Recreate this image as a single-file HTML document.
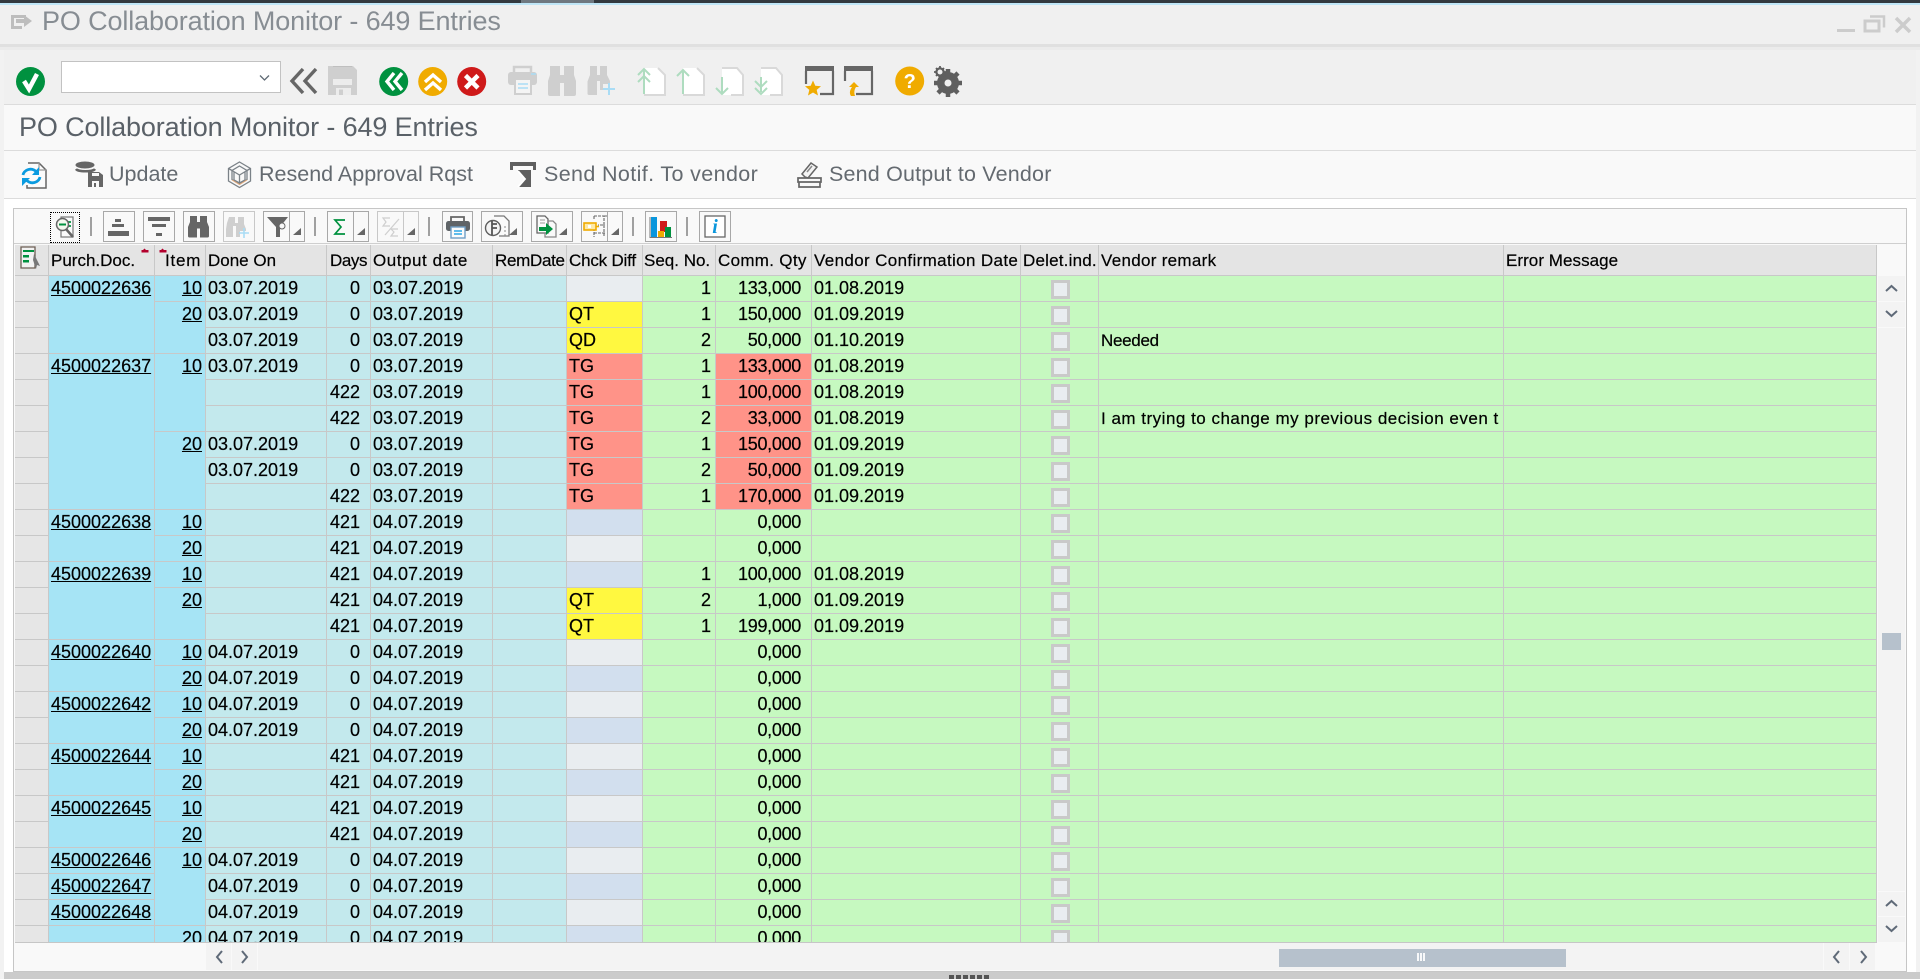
<!DOCTYPE html>
<html><head><meta charset="utf-8"><title>PO Collaboration Monitor - 649 Entries</title>
<style>
html,body{margin:0;padding:0;width:1920px;height:979px;overflow:hidden;background:#f2f2f2;font-family:"Liberation Sans",Arial,sans-serif;color:#000}
.a{position:absolute}
.ttl{position:absolute;font-size:27px;letter-spacing:-.13px;line-height:34px;white-space:nowrap}
.btn{position:absolute;font-size:21.5px;line-height:28px;top:160px;color:#646a70;white-space:nowrap}
#wrap{position:absolute;left:15px;top:245px;width:1862px;height:698px;overflow:hidden;border-bottom:1px solid #c6c6c6;box-sizing:border-box}
table{border-collapse:separate;border-spacing:0;table-layout:fixed;width:1862px}
td,th{box-sizing:border-box;height:26px;padding:0 0 0 2px;border-right:1px solid #c8c8c8;border-bottom:1px solid #c8c8c8;font-weight:normal;font-size:18px;line-height:25px;text-align:left;white-space:nowrap;overflow:hidden;vertical-align:top;-webkit-text-stroke:.2px #000}
th{height:31px;background:#e4e4e4;font-size:17px;line-height:28px;padding-top:2px}
u{text-decoration:underline}
.rh{background:#e6e6e6;padding:0}
.p{background:#a6e4f5}
.i{background:#a6e4f5;text-align:right;padding-right:3px}
.t{background:#c3e9ed}
.n{background:#c3e9ed;text-align:right;padding-right:10px}
.g{background:#e9edf0}.b{background:#d2dfee}.y{background:#fff840}.x{background:#ff9388}
.s{background:#c6f9c0;text-align:right;padding-right:4px}
.q{background:#c6f9c0;text-align:right;padding-right:10px;letter-spacing:-.3px}
.qr{background:#ff9388;text-align:right;padding-right:10px;letter-spacing:-.3px}
.v{background:#c6f9c0}
.c{background:#c6f9c0;padding:0}
.c span{display:block;position:relative;left:1px;box-sizing:border-box;width:19px;height:19px;border:3px solid #c9c9c9;background:#e9edf0;margin:4px auto 0}
.r{font-size:17px}
.sb{position:absolute;background:#f3f3f3}
.tb{position:absolute;top:211px;height:31px;box-sizing:border-box;border:1px solid #a8a8a8;background:#f9f9f9}
.tbd{border-color:#c8c8c8}
.sep{position:absolute;top:217px;width:2px;height:19px;background:#a0a0a0}
</style></head><body>

<!-- frame -->
<div class="a" style="left:0;top:0;width:1920px;height:3px;background:#33393f"></div>
<div class="a" style="left:521px;top:0;width:73px;height:3px;background:#6f7880"></div>
<div class="a" style="left:0;top:3px;width:1920px;height:2px;background:#bfe6f7"></div>
<div class="a" style="left:0;top:5px;width:1920px;height:39px;background:#f0f0f0"></div>
<div class="a" style="left:0;top:44px;width:1920px;height:3px;background:#e0e0e0"></div>
<div class="a" style="left:0;top:47px;width:1920px;height:3px;background:#ebebeb"></div>
<div class="a" style="left:4px;top:50px;width:1912px;height:54px;background:#f0f0f0"></div>
<div class="a" style="left:4px;top:104px;width:1912px;height:46px;background:#f9f9f9;border-top:1px solid #dcdcdc;box-sizing:border-box"></div>
<div class="a" style="left:4px;top:150px;width:1912px;height:48px;background:#f9f9f9;border-top:1px solid #dcdcdc;box-sizing:border-box"></div>
<div class="a" style="left:4px;top:198px;width:1912px;height:774px;background:#fff;border-top:1px solid #dcdcdc;box-sizing:border-box"></div>
<div class="a" style="left:4px;top:972px;width:1916px;height:7px;background:#cbcbcb"></div>

<!-- grid container -->
<div class="a" style="left:13px;top:208px;width:1894px;height:764px;box-sizing:border-box;border:1px solid #c6c6c6;background:#f9f9f9"></div>
<div class="a" style="left:14px;top:243px;width:1892px;height:1px;background:#cfcfcf"></div>

<div class="ttl" style="left:42px;top:4px;color:#878d93">PO Collaboration Monitor - 649 Entries</div>
<div class="ttl" style="left:19px;top:110px;color:#5a6168">PO Collaboration Monitor - 649 Entries</div>
<div class="btn" style="left:109px">Update</div>
<div class="btn" style="left:259px">Resend Approval Rqst</div>
<div class="btn" style="left:544px;letter-spacing:.37px">Send Notif. To vendor</div>
<div class="btn" style="left:829px;letter-spacing:.18px">Send Output to Vendor</div>

<!-- combo -->
<div class="a" style="left:61px;top:61px;width:220px;height:32px;box-sizing:border-box;background:#fff;border:1px solid #c2c2c2"></div>

<!-- grid toolbar buttons -->
<div class="tb" style="left:50px;width:30px;top:212px;border:1px dotted #000"></div>
<div class="sep" style="left:90px"></div>
<div class="tb" style="left:103px;width:32px"></div>
<div class="tb" style="left:143px;width:32px"></div>
<div class="tb" style="left:183px;width:32px"></div>
<div class="tb tbd" style="left:223px;width:32px"></div>
<div class="tb" style="left:263px;width:27px"></div><div class="tb" style="left:289px;width:16px"></div>
<div class="sep" style="left:314px"></div>
<div class="tb" style="left:327px;width:27px"></div><div class="tb" style="left:353px;width:16px"></div>
<div class="tb tbd" style="left:377px;width:27px"></div><div class="tb tbd" style="left:403px;width:16px"></div>
<div class="sep" style="left:428px"></div>
<div class="tb" style="left:442px;width:31px"></div>
<div class="tb" style="left:481px;width:42px"></div>
<div class="tb" style="left:531px;width:42px"></div>
<div class="tb" style="left:581px;width:27px"></div><div class="tb" style="left:607px;width:16px"></div>
<div class="sep" style="left:632px"></div>
<div class="tb" style="left:645px;width:32px"></div>
<div class="sep" style="left:686px"></div>
<div class="tb" style="left:699px;width:32px"></div>

<!-- table -->
<div id="wrap"><table>
<colgroup><col style="width:34px"><col style="width:106px"><col style="width:51px"><col style="width:121px"><col style="width:44px"><col style="width:122px"><col style="width:74px"><col style="width:76px"><col style="width:73px"><col style="width:96px"><col style="width:209px"><col style="width:78px"><col style="width:405px"><col style="width:373px"></colgroup>
<tr><th style="padding:0"></th><th>Purch.Doc.</th><th style="padding-left:10px;letter-spacing:.8px">Item</th><th>Done On</th><th style="padding-left:3px;letter-spacing:-.4px">Days</th><th style="letter-spacing:.55px">Output date</th><th style="letter-spacing:-.3px">RemDate</th><th style="letter-spacing:-.2px">Chck Diff</th><th style="padding-left:1px">Seq. No.</th><th style="letter-spacing:.3px">Comm. Qty</th><th style="letter-spacing:.36px">Vendor Confirmation Date</th><th style="padding-left:2px;letter-spacing:.2px">Delet.ind.</th><th style="padding-left:2px;letter-spacing:.3px">Vendor remark</th><th style="letter-spacing:.05px">Error Message</th></tr>

<tr><td class="rh"></td><td class="p" rowspan="3"><u>4500022636</u></td><td class="i"><u>10</u></td><td class="t">03.07.2019</td><td class="n">0</td><td class="t">03.07.2019</td><td class="t"></td><td class="g"></td><td class="s">1</td><td class="q">133,000</td><td class="v">01.08.2019</td><td class="c"><span></span></td><td class="v"></td><td class="v"></td></tr>
<tr><td class="rh"></td><td class="i" rowspan="2"><u>20</u></td><td class="t">03.07.2019</td><td class="n">0</td><td class="t">03.07.2019</td><td class="t"></td><td class="y">QT</td><td class="s">1</td><td class="q">150,000</td><td class="v">01.09.2019</td><td class="c"><span></span></td><td class="v"></td><td class="v"></td></tr>
<tr><td class="rh"></td><td class="t">03.07.2019</td><td class="n">0</td><td class="t">03.07.2019</td><td class="t"></td><td class="y">QD</td><td class="s">2</td><td class="q">50,000</td><td class="v">01.10.2019</td><td class="c"><span></span></td><td class="v r" style="padding-left:2px;letter-spacing:-.3px">Needed</td><td class="v"></td></tr>
<tr><td class="rh"></td><td class="p" rowspan="6"><u>4500022637</u></td><td class="i" rowspan="3"><u>10</u></td><td class="t">03.07.2019</td><td class="n">0</td><td class="t">03.07.2019</td><td class="t"></td><td class="x">TG</td><td class="s">1</td><td class="qr">133,000</td><td class="v">01.08.2019</td><td class="c"><span></span></td><td class="v"></td><td class="v"></td></tr>
<tr><td class="rh"></td><td class="t"></td><td class="n">422</td><td class="t">03.07.2019</td><td class="t"></td><td class="x">TG</td><td class="s">1</td><td class="qr">100,000</td><td class="v">01.08.2019</td><td class="c"><span></span></td><td class="v"></td><td class="v"></td></tr>
<tr><td class="rh"></td><td class="t"></td><td class="n">422</td><td class="t">03.07.2019</td><td class="t"></td><td class="x">TG</td><td class="s">2</td><td class="qr">33,000</td><td class="v">01.08.2019</td><td class="c"><span></span></td><td class="v r" style="padding-left:2px;letter-spacing:.5px">I am trying to change my previous decision even t</td><td class="v"></td></tr>
<tr><td class="rh"></td><td class="i" rowspan="3"><u>20</u></td><td class="t">03.07.2019</td><td class="n">0</td><td class="t">03.07.2019</td><td class="t"></td><td class="x">TG</td><td class="s">1</td><td class="qr">150,000</td><td class="v">01.09.2019</td><td class="c"><span></span></td><td class="v"></td><td class="v"></td></tr>
<tr><td class="rh"></td><td class="t">03.07.2019</td><td class="n">0</td><td class="t">03.07.2019</td><td class="t"></td><td class="x">TG</td><td class="s">2</td><td class="qr">50,000</td><td class="v">01.09.2019</td><td class="c"><span></span></td><td class="v"></td><td class="v"></td></tr>
<tr><td class="rh"></td><td class="t"></td><td class="n">422</td><td class="t">03.07.2019</td><td class="t"></td><td class="x">TG</td><td class="s">1</td><td class="qr">170,000</td><td class="v">01.09.2019</td><td class="c"><span></span></td><td class="v"></td><td class="v"></td></tr>
<tr><td class="rh"></td><td class="p" rowspan="2"><u>4500022638</u></td><td class="i"><u>10</u></td><td class="t"></td><td class="n">421</td><td class="t">04.07.2019</td><td class="t"></td><td class="b"></td><td class="s"></td><td class="q">0,000</td><td class="v"></td><td class="c"><span></span></td><td class="v"></td><td class="v"></td></tr>
<tr><td class="rh"></td><td class="i"><u>20</u></td><td class="t"></td><td class="n">421</td><td class="t">04.07.2019</td><td class="t"></td><td class="g"></td><td class="s"></td><td class="q">0,000</td><td class="v"></td><td class="c"><span></span></td><td class="v"></td><td class="v"></td></tr>
<tr><td class="rh"></td><td class="p" rowspan="3"><u>4500022639</u></td><td class="i"><u>10</u></td><td class="t"></td><td class="n">421</td><td class="t">04.07.2019</td><td class="t"></td><td class="b"></td><td class="s">1</td><td class="q">100,000</td><td class="v">01.08.2019</td><td class="c"><span></span></td><td class="v"></td><td class="v"></td></tr>
<tr><td class="rh"></td><td class="i" rowspan="2"><u>20</u></td><td class="t"></td><td class="n">421</td><td class="t">04.07.2019</td><td class="t"></td><td class="y">QT</td><td class="s">2</td><td class="q">1,000</td><td class="v">01.09.2019</td><td class="c"><span></span></td><td class="v"></td><td class="v"></td></tr>
<tr><td class="rh"></td><td class="t"></td><td class="n">421</td><td class="t">04.07.2019</td><td class="t"></td><td class="y">QT</td><td class="s">1</td><td class="q">199,000</td><td class="v">01.09.2019</td><td class="c"><span></span></td><td class="v"></td><td class="v"></td></tr>
<tr><td class="rh"></td><td class="p" rowspan="2"><u>4500022640</u></td><td class="i"><u>10</u></td><td class="t">04.07.2019</td><td class="n">0</td><td class="t">04.07.2019</td><td class="t"></td><td class="g"></td><td class="s"></td><td class="q">0,000</td><td class="v"></td><td class="c"><span></span></td><td class="v"></td><td class="v"></td></tr>
<tr><td class="rh"></td><td class="i"><u>20</u></td><td class="t">04.07.2019</td><td class="n">0</td><td class="t">04.07.2019</td><td class="t"></td><td class="b"></td><td class="s"></td><td class="q">0,000</td><td class="v"></td><td class="c"><span></span></td><td class="v"></td><td class="v"></td></tr>
<tr><td class="rh"></td><td class="p" rowspan="2"><u>4500022642</u></td><td class="i"><u>10</u></td><td class="t">04.07.2019</td><td class="n">0</td><td class="t">04.07.2019</td><td class="t"></td><td class="g"></td><td class="s"></td><td class="q">0,000</td><td class="v"></td><td class="c"><span></span></td><td class="v"></td><td class="v"></td></tr>
<tr><td class="rh"></td><td class="i"><u>20</u></td><td class="t">04.07.2019</td><td class="n">0</td><td class="t">04.07.2019</td><td class="t"></td><td class="b"></td><td class="s"></td><td class="q">0,000</td><td class="v"></td><td class="c"><span></span></td><td class="v"></td><td class="v"></td></tr>
<tr><td class="rh"></td><td class="p" rowspan="2"><u>4500022644</u></td><td class="i"><u>10</u></td><td class="t"></td><td class="n">421</td><td class="t">04.07.2019</td><td class="t"></td><td class="g"></td><td class="s"></td><td class="q">0,000</td><td class="v"></td><td class="c"><span></span></td><td class="v"></td><td class="v"></td></tr>
<tr><td class="rh"></td><td class="i"><u>20</u></td><td class="t"></td><td class="n">421</td><td class="t">04.07.2019</td><td class="t"></td><td class="b"></td><td class="s"></td><td class="q">0,000</td><td class="v"></td><td class="c"><span></span></td><td class="v"></td><td class="v"></td></tr>
<tr><td class="rh"></td><td class="p" rowspan="2"><u>4500022645</u></td><td class="i"><u>10</u></td><td class="t"></td><td class="n">421</td><td class="t">04.07.2019</td><td class="t"></td><td class="g"></td><td class="s"></td><td class="q">0,000</td><td class="v"></td><td class="c"><span></span></td><td class="v"></td><td class="v"></td></tr>
<tr><td class="rh"></td><td class="i"><u>20</u></td><td class="t"></td><td class="n">421</td><td class="t">04.07.2019</td><td class="t"></td><td class="b"></td><td class="s"></td><td class="q">0,000</td><td class="v"></td><td class="c"><span></span></td><td class="v"></td><td class="v"></td></tr>
<tr><td class="rh"></td><td class="p"><u>4500022646</u></td><td class="i" rowspan="3"><u>10</u></td><td class="t">04.07.2019</td><td class="n">0</td><td class="t">04.07.2019</td><td class="t"></td><td class="g"></td><td class="s"></td><td class="q">0,000</td><td class="v"></td><td class="c"><span></span></td><td class="v"></td><td class="v"></td></tr>
<tr><td class="rh"></td><td class="p"><u>4500022647</u></td><td class="t">04.07.2019</td><td class="n">0</td><td class="t">04.07.2019</td><td class="t"></td><td class="b"></td><td class="s"></td><td class="q">0,000</td><td class="v"></td><td class="c"><span></span></td><td class="v"></td><td class="v"></td></tr>
<tr><td class="rh"></td><td class="p"><u>4500022648</u></td><td class="t">04.07.2019</td><td class="n">0</td><td class="t">04.07.2019</td><td class="t"></td><td class="g"></td><td class="s"></td><td class="q">0,000</td><td class="v"></td><td class="c"><span></span></td><td class="v"></td><td class="v"></td></tr>
<tr><td class="rh"></td><td class="p"></td><td class="i">20</td><td class="t">04.07.2019</td><td class="n">0</td><td class="t">04.07.2019</td><td class="t"></td><td class="b"></td><td class="s"></td><td class="q">0,000</td><td class="v"></td><td class="c"><span></span></td><td class="v"></td><td class="v"></td></tr>
</table></div>

<!-- scrollbars -->
<div class="sb" style="left:1878px;top:276px;width:27px;height:666px"></div>
<div class="a" style="left:1878px;top:301px;width:27px;height:1px;background:#f9f9f9"></div>
<div class="a" style="left:1878px;top:327px;width:27px;height:1px;background:#f9f9f9"></div>
<div class="a" style="left:1878px;top:891px;width:27px;height:1px;background:#f9f9f9"></div>
<div class="a" style="left:1878px;top:916px;width:27px;height:1px;background:#f9f9f9"></div>
<div class="a" style="left:1882px;top:633px;width:19px;height:17px;background:#b6c1cc"></div>
<div class="sb" style="left:206px;top:943px;width:1669px;height:27px"></div>
<div class="a" style="left:231px;top:943px;width:1px;height:27px;background:#f9f9f9"></div>
<div class="a" style="left:257px;top:943px;width:1px;height:27px;background:#f9f9f9"></div>
<div class="a" style="left:1823px;top:943px;width:1px;height:27px;background:#f9f9f9"></div>
<div class="a" style="left:1849px;top:943px;width:1px;height:27px;background:#f9f9f9"></div>
<div class="a" style="left:1279px;top:949px;width:287px;height:18px;background:#b6c1cc"></div>

<!-- icons -->
<svg class="a" style="left:0;top:0" width="1920" height="979" viewBox="0 0 1920 979" fill="none">
<!-- title doc icon -->
<path d="M11 15h15v3h-12v8h8v3h-11z" fill="#bdbdbd"/><path d="M16 19h8v-4l8 6-8 6v-4h-8z" fill="#bdbdbd"/>
<!-- window controls -->
<path d="M1837 29h18v3h-18z" fill="#ccc"/>
<path d="M1865 21h14v10h-14z" stroke="#ccc" stroke-width="3"/><path d="M1870 16.500h14v11" stroke="#ccc" stroke-width="2.500"/>
<path d="M1896 18l14 14M1910 18l-14 14" stroke="#ccc" stroke-width="3.500"/>
<!-- check -->
<circle cx="30.500" cy="81.500" r="14.500" fill="#00913f"/>
<path d="M24 81l5 8 8-15" stroke="#fff" stroke-width="4.500"/>
<!-- combo chevron -->
<path d="M260 75.500l4.500 4.500 4.500-4.500" stroke="#5f6a74" stroke-width="1.300"/>
<!-- back double chevron -->
<path d="M303 69l-11 12 11 12M316 69l-11 12 11 12" stroke="#666" stroke-width="3.400"/>
<!-- floppy -->
<path d="M328 66h25l4 4v25h-29z" fill="#cfcfcf"/>
<path d="M333 79h19v6h-19z" fill="#ececec"/><path d="M336 88h15v7h-15z" fill="#ececec"/><path d="M339 89.500h4v5.500h-4z" fill="#cfcfcf"/>
<path d="M333 66h19v1h-19z" fill="#bfbfbf"/>
<!-- nav circles -->
<circle cx="393.700" cy="81.500" r="14.500" fill="#00913f"/>
<path d="M394 73l-7 8.500 7 8.500M402 73l-7 8.500 7 8.500" stroke="#fff" stroke-width="3.400"/>
<circle cx="432.700" cy="81.500" r="14.500" fill="#f0ab00"/>
<path d="M425 82l8-7 8 7M425 90l8-7 8 7" stroke="#fff" stroke-width="3.400"/>
<circle cx="471.700" cy="81.500" r="14.500" fill="#cf1a1a"/>
<path d="M465.500 75.500l12.500 12.500M478 75.500l-12.500 12.500" stroke="#fff" stroke-width="4.500"/>
<!-- printer disabled -->
<path d="M514 72v-5h17v5" stroke="#cfcfcf" stroke-width="2.500"/>
<rect x="508" y="72" width="29" height="13" rx="3" fill="#cfcfcf"/>
<rect x="515" y="79" width="16" height="15" fill="#f4f4f4" stroke="#cfcfcf" stroke-width="2"/>
<path d="M518 84h10M518 88h10" stroke="#a9dcf5" stroke-width="1.600"/>
<path d="M531 74h5" stroke="#a9dcf5" stroke-width="1.500"/>
<!-- binoculars disabled -->
<path d="M550 66h10v9h4v-9h10v9l2 6v13q0 2-2 2h-10v-13h-4v13h-10q-2 0-2-2v-13l2-6z" fill="#cfcfcf"/>
<path d="M590 66h7v9h3v-9h7v9l3 6v3h-7v6h-3v-9h-3v14h-8q-1.500 0-1.500-1.500v-12l2.500-6.500z" fill="#cfcfcf"/>
<path d="M603 89h12M609 83v12" stroke="#a9dcf5" stroke-width="2"/>
<!-- docs with arrows -->
<g fill="#fff" stroke="#d9d9d9" stroke-width="2">
<path d="M644 68h15l6 6v21h-21z" stroke="none"/><path d="M658 68l7 7v20h-21" fill="none"/>
<path d="M683 68h15l6 6v21h-21z" stroke="none"/><path d="M697 68l7 7v20h-21" fill="none"/>
<path d="M722 68h15l6 6v21h-21z" stroke="none"/><path d="M722 68h15l6 7v20h-12" fill="none"/>
<path d="M761 68h15l6 6v21h-21z" stroke="none"/><path d="M761 68h15l6 7v20h-12" fill="none"/>
</g>
<g stroke="#aedcbf" stroke-width="2">
<path d="M644 94V70M638 75l6-6 6 6M638 82l6-6 6 6"/>
<path d="M683 94V70M677 76l6-6 6 6"/>
<path d="M722 94V77M716 88l6 6 6-6"/>
<path d="M761 92V77M755 81l6 6 6-6M755 88l6 6 6-6"/>
</g>
<!-- windows -->
<path d="M805 66h29v5h-29z" fill="#666"/><path d="M806 71v13M833 71v23h-13" stroke="#666" stroke-width="2.200"/>
<path d="M813 80.500l2.300 5.200 5.700.500-4.300 3.700 1.300 5.600-5-3-5 3 1.300-5.600-4.300-3.700 5.700-.500z" fill="#f0ab00"/>
<path d="M844 66h29v5h-29z" fill="#666"/><path d="M845 71v10M872 71v23h-16" stroke="#666" stroke-width="2.200"/>
<path d="M854 82l-5 5h3c-2 3-3 6-1 9h4c-1-3-1-6 1-9h3z" fill="#f0ab00"/>
<!-- help -->
<circle cx="909.700" cy="81" r="14.500" fill="#f0ab00"/>
<text x="909.700" y="88" text-anchor="middle" font-family="Liberation Sans,sans-serif" font-weight="bold" font-size="20" fill="#fff">?</text>
<!-- gears -->
<circle cx="948" cy="83" r="8" stroke="#5f5f5f" stroke-width="6"/>
<path d="M948 69v28M934 83h28M938 73l20 20M958 73l-20 20" stroke="#5f5f5f" stroke-width="4.500"/>
<circle cx="948" cy="83" r="3.500" fill="#f0f0f0"/>
<circle cx="940" cy="72" r="3.500" stroke="#5f5f5f" stroke-width="2.500"/>
<path d="M940 66v12M934 72h12M936 68l8 8M944 68l-8 8" stroke="#5f5f5f" stroke-width="1.800"/>
<circle cx="940" cy="72" r="2.500" fill="#f0f0f0"/>
<!-- refresh doc -->
<path d="M28 163h11l7 7v18h-19v-3" stroke="#666" stroke-width="1.500" fill="#fbfbfb"/>
<path d="M39 163v7h7" stroke="#999" stroke-width="1.200"/>
<path d="M23 175c1-5 7-7 11-5l3 2" stroke="#0a9be0" stroke-width="2.800"/><path d="M39 167v8h-7z" fill="#0a9be0"/>
<path d="M40 177c-1 5-7 7-11 5l-3-2" stroke="#0a9be0" stroke-width="2.800"/><path d="M22 186v-8h8z" fill="#0a9be0"/>
<!-- db + save -->
<ellipse cx="85" cy="165" rx="9.500" ry="3.500" fill="#666"/>
<path d="M76 169c2 3 17 3 19 0" stroke="#666" stroke-width="2.500"/>
<path d="M88 172h11l4 3v12h-15z" fill="#666"/><path d="M92 173h7v3h-7z" fill="#f9f9f9"/><path d="M92 181h7v6h-7z" fill="#f9f9f9"/><path d="M94 183h2v4h-2z" fill="#666"/>
<!-- resend hex -->
<g stroke="#7b8288" stroke-width="1.300">
<path d="M239.500 162l11 6.500v12.500l-11 6.500-11-6.500v-12.500z"/>
<path d="M239.500 166l7.500 4.500v9l-7.500 4.500-7.500-4.500v-9z"/>
<path d="M232 170.500l7.500 4.500 7.500-4.500M239.500 175v9M228.500 168.500l3.500 2M250.500 168.500l-3.500 2M234 172v8l5.500 3M245 172v8l-5.500 3"/>
</g>
<path d="M232 180l7.500 4.500 7.500-4.500" stroke="#e3a878" stroke-width="1"/>
<!-- send notif -->
<path d="M510 162h26v8h-3v-4h-20v4h-3z" fill="#5f5f5f"/>
<path d="M518 170h13v17h-13z" fill="#5f5f5f"/>
<path d="M518 171l7 8-7 8" stroke="#fff" stroke-width="1.800" fill="#f9f9f9"/>
<!-- send output -->
<path d="M805 177l-3-3 9-11 6 4-9 11z" stroke="#666" stroke-width="1.500" fill="#f4f4f4"/>
<path d="M807 172l5-6" stroke="#888" stroke-width="1.500"/>
<path d="M798 178h23v4h-23z" stroke="#666" stroke-width="1.700"/><path d="M799 182v5h21v-5" stroke="#666" stroke-width="1.700"/>

<!-- grid toolbar icons -->
<rect x="61" y="217" width="12" height="20" fill="#fafafa" stroke="#777" stroke-width="1.200"/>
<path d="M64 222h7M64 226h7" stroke="#00913f" stroke-width="1.800"/>
<circle cx="62.500" cy="224.500" r="6" fill="#f4f8ee" stroke="#666" stroke-width="1.500"/>
<path d="M59 224.500h7" stroke="#00913f" stroke-width="2"/>
<path d="M66 229l7 8" stroke="#666" stroke-width="2.500"/>

<path d="M115 219h6v3h-6zM112 224h12v3h-12zM108 231h21v5h-21z" fill="#666"/>
<path d="M148 217h22v4h-22zM152 224h14v3h-14zM156 233h6v3h-6z" fill="#666"/>
<path d="M190 216h7v6h3v-6h7v6l2 5v9q0 1.500-1.500 1.500h-7.500v-9h-3v9h-7.500q-1.500 0-1.500-1.500v-9l2-5z" fill="#666"/>
<path d="M229 217h6v6h3v-6h6v7l2 5v2h-6v6h-4v-11h-3v11h-7v-8l1-6z" fill="#cfcfcf"/>
<path d="M239 233h10M244 228v10" stroke="#a9dcf5" stroke-width="1.600"/>
<path d="M267 217h21l-8 10v10h-4v-10z" fill="#666"/>
<circle cx="282" cy="226" r="3" fill="#f9f9f9" stroke="#666" stroke-width="1"/>
<path d="M293 235h8v-7z M357 235h8v-7z M407 235h8v-7z M509 235h8v-7z M559 235h8v-7z M611 235h8v-7z" fill="#666"/>
<path d="M345 220h-10l6 7-6 7h10" stroke="#00913f" stroke-width="1.700"/>
<path d="M390 218h-7l3 4-3 4h7M398 229h-7l3 3-3 4h7" stroke="#cfcfcf" stroke-width="1.200"/>
<path d="M385 235l14-16" stroke="#cfcfcf" stroke-width="1.200"/>
<!-- print -->
<path d="M451 222v-5h13v5" stroke="#666" stroke-width="1.800"/>
<rect x="446" y="221" width="24" height="10" rx="2.500" fill="#5f6468"/>
<rect x="451" y="227" width="14" height="11" fill="#fbfbfb" stroke="#6f9fc7" stroke-width="1.400"/>
<path d="M454 231h8M454 234h8" stroke="#2aa7e8" stroke-width="1.400"/>
<!-- local file -->
<path d="M494 216h10l5 5v15h-10" stroke="#777" stroke-width="1.300" fill="#fafafa"/>
<circle cx="493" cy="228" r="7.500" fill="#f4f4f4" stroke="#5f5f5f" stroke-width="1.400"/>
<path d="M492 221v14M492 224h5M492 228h5" stroke="#555" stroke-width="1.800"/>
<path d="M505 226v2M505 230v2M505 234v2" stroke="#888" stroke-width="1"/>
<!-- export -->
<path d="M537 216h8l3 3v14h-11z" stroke="#666" stroke-width="1.300" fill="#fafafa"/>
<path d="M548 221h5l3 3v13h-11v-4" stroke="#888" stroke-width="1.300"/>
<path d="M540 220h5M540 223h5" stroke="#999" stroke-width="1"/>
<path d="M539 227h7v-4l7 6-7 6v-4h-7z" fill="#00913f"/>
<!-- layout -->
<path d="M594 216h10v9h-6M594 216v4M604 225v12M594 233h12M604 216h3M594 228v9" stroke="#666" stroke-width="1.100" stroke-dasharray="3 1"/>
<rect x="584" y="223" width="12" height="7" fill="#fde9a8" stroke="#f0ab00" stroke-width="1.600"/>
<path d="M596 226.500h3" stroke="#f0ab00" stroke-width="1.600"/><path d="M588 225h3v3h-3z" fill="#fff"/>
<!-- chart -->
<path d="M651 217h6v20h-6z" fill="#0a96dc"/><path d="M660 221h7v11h-7z" fill="#cf1a1a"/><path d="M658 231h6v6h-6z" fill="#f0ab00"/><path d="M665 227h6v10h-6z" fill="#00913f"/>
<path d="M650 217v20.500h22" stroke="#777" stroke-width="1"/>
<!-- info -->
<rect x="705" y="216" width="20" height="21" fill="#fff" stroke="#666" stroke-width="1.300"/>
<text x="715" y="233" text-anchor="middle" font-family="Liberation Serif,serif" font-style="italic" font-weight="bold" font-size="20" fill="#0a96dc">i</text>

<!-- corner list icon -->
<path d="M21 247h14v21h-14z" stroke="#6d5f55" stroke-width="1.300" fill="#f2f2f2"/>
<path d="M23 250h11v2h-11zM23 255h6v2.500h-6zM23 260h6v2.500h-6z" fill="#00913f"/>
<path d="M34 254l6 12-3-1-1 4-3-9z" fill="#777"/>
<!-- sort markers -->
<path d="M143 250l1.500-1.500 1.500 1.500h2.500v2.500h-7v-2.500z" fill="#b3002d"/>
<path d="M161 250l1.500-1.500 1.500 1.500h2.500v2.500h-7v-2.500z" fill="#b3002d"/>

<!-- scroll arrows -->
<g stroke="#5f6a78" stroke-width="2">
<path d="M1886 291l5.500-5 5.500 5M1886 311l5.500 5 5.500-5M1886 906l5.500-5 5.500 5M1886 926l5.500 5 5.500-5"/>
<path d="M222 951l-5 6 5 6M242 951l5 6-5 6M1839 951l-5 6 5 6M1861 951l5 6-5 6"/>
</g>
<path d="M1418 953v8M1421 953v8M1424 953v8" stroke="#fff" stroke-width="1.800"/>
<!-- sash -->
<path d="M949 977h41" stroke="#555" stroke-width="4" stroke-dasharray="5 2"/>
</svg>
</body></html>
